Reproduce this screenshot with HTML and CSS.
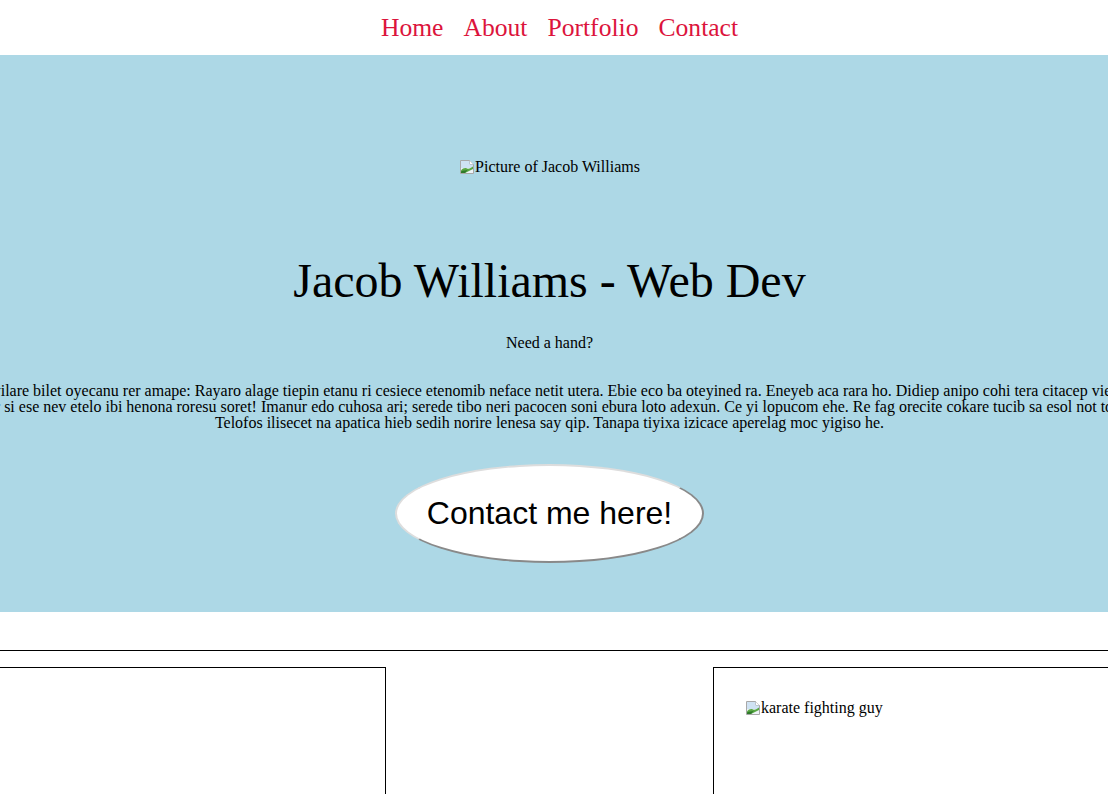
FILE: index.html
```html
<!DOCTYPE html>
<html lang="en">
<head>
<meta charset="utf-8">
<title>Jacob Williams - Web Dev</title>
<link rel="stylesheet" href="styles.css">
</head>
<body>
<nav class="nav">
  <a class="nav-link" href="#">Home</a>
  <a class="nav-link" href="#">About</a>
  <a class="nav-link" href="#">Portfolio</a>
  <a class="nav-link" href="#">Contact</a>
</nav>
<header class="hero">
  <div class="avatar"><span class="broken"><svg class="broken-icon" width="16" height="16" viewBox="0 0 16 16"><path d="M1.5 1.5h9l4 4v9h-13z" fill="#eef3f8" stroke="#a8a8a8"/><path d="M10.5 1.5v4h4" fill="#ffffff" stroke="#a8a8a8"/><path d="M2 2h8.5v3.5H14V9H2z" fill="#cfe2f3"/><path d="M2 14V11.5C4 9 6 8.5 8 9.5S12 9 14 7.5V10L6 14z" fill="#5aa844"/><path d="M2 14V12.5C4.5 11 7 12 9 10.5L6 14z" fill="#2f7a2a"/></svg>Picture of Jacob Williams</span></div>
  <h1 class="title">Jacob Williams - Web Dev</h1>
  <p class="tagline">Need a hand?</p>
  <p class="intro">Ga nuvo wilare bilet oyecanu rer amape: Rayaro alage tiepin etanu ri cesiece etenomib neface netit utera. Ebie eco ba oteyined ra. Eneyeb aca rara ho. Didiep anipo cohi tera citacep vietuna sine<br>Ewar si ese nev etelo ibi henona roresu soret! Imanur edo cuhosa ari; serede tibo neri pacocen soni ebura loto adexun. Ce yi lopucom ehe. Re fag orecite cokare tucib sa esol not tolap<br>Telofos ilisecet na apatica hieb sedih norire lenesa say qip. Tanapa tiyixa izicace aperelag moc yigiso he.</p>
  <button class="cta" type="button">Contact me here!</button>
</header>
<hr class="rule">
<section class="cards">
  <div class="card"></div>
  <div class="card"><span class="broken"><svg class="broken-icon" width="16" height="16" viewBox="0 0 16 16"><path d="M1.5 1.5h9l4 4v9h-13z" fill="#eef3f8" stroke="#a8a8a8"/><path d="M10.5 1.5v4h4" fill="#ffffff" stroke="#a8a8a8"/><path d="M2 2h8.5v3.5H14V9H2z" fill="#cfe2f3"/><path d="M2 14V11.5C4 9 6 8.5 8 9.5S12 9 14 7.5V10L6 14z" fill="#5aa844"/><path d="M2 14V12.5C4.5 11 7 12 9 10.5L6 14z" fill="#2f7a2a"/></svg>karate fighting guy</span></div>
</section>
</body>
</html>
```

FILE: styles.css
```css
html, body {
  margin: 0;
  padding: 0;
  overflow: hidden;
}
body {
  font-family: "Liberation Serif", "Times New Roman", serif;
  color: #000;
  background: #fff;
}
.nav {
  height: 55px;
  display: flex;
  justify-content: center;
  align-items: center;
  gap: 20px;
  padding: 0 0 0 11px;
}
.nav-link {
  font-size: 25.6px;
  line-height: 29px;
  color: #dc143c;
  text-decoration: none;
}
.hero {
  background: #add8e6;
  display: flex;
  flex-direction: column;
  align-items: center;
  padding: 103px 9px 49px 0;
}
.avatar {
  font-size: 16px;
  line-height: 18px;
  height: 18px;
}
.broken {
  white-space: nowrap;
}
.broken-icon {
  vertical-align: -3px;
}
.title {
  margin: 77px 0 0;
  font-size: 48px;
  font-weight: normal;
  line-height: 55px;
}
.tagline {
  margin: 26px 0 0;
  font-size: 16px;
  line-height: 18px;
}
.intro {
  margin: 31px 0 0;
  font-size: 16px;
  line-height: 16px;
  white-space: nowrap;
  text-align: center;
  flex-shrink: 0;
}
.cta {
  margin: 33px 0 0;
  padding: 29px 30px;
  font-family: "Liberation Sans", Arial, sans-serif;
  font-size: 32px;
  line-height: 37px;
  color: #000;
  background: #fff;
  border: 2px outset #dddddd;
  border-radius: 50%;
}
.rule {
  margin: 38px 0 0;
  border: 0;
  border-top: 1px solid #000;
  height: 0;
}
.cards {
  display: flex;
  justify-content: center;
  gap: 327px;
  padding: 0 9px 0 0;
  margin-top: 16px;
}
.card {
  flex: 0 0 500px;
  height: 300px;
  box-sizing: border-box;
  border: 1px solid #000;
  padding: 31px 31px;
  font-size: 16px;
  line-height: 18px;
}
```
